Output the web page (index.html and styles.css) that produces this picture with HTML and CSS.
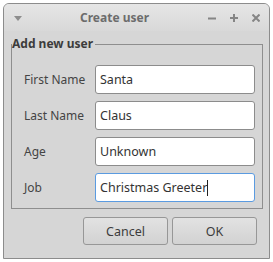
FILE: index.html
```html
<!DOCTYPE html>
<html lang="en">
<head>
    <meta charset="UTF-8">
    <title>Create user</title>
    <link rel="stylesheet" href="styles.css">
</head>
<body>
    <div class="window">
        <div class="titlebar">
            <svg class="menu-icon" width="8" height="5" viewBox="0 0 8 5"><polygon points="0,0 8,0 4,5" fill="#8d8d8d"/></svg>
            <div class="title">Create user</div>
            <div class="title-right">
                <svg width="8" height="8" viewBox="0 0 8 8"><path d="M0 4.5H8" stroke="#858585" stroke-width="2"/></svg>
                <svg width="8" height="8" viewBox="0 0 8 8"><path d="M0 4H8M4 0V8" stroke="#858585" stroke-width="2"/></svg>
                <svg width="8" height="8" viewBox="0 0 8 8"><path d="M0.5 0.5L7.5 7.5M7.5 0.5L0.5 7.5" stroke="#858585" stroke-width="2"/></svg>
            </div>
        </div>
        <div class="content">
            <fieldset class="group">
                <legend>Add new user</legend>
                <div class="form-grid">
                    <label for="first">First Name</label>
                    <input type="text" id="first" value="Santa">
                    <label for="last">Last Name</label>
                    <input type="text" id="last" value="Claus">
                    <label for="age">Age</label>
                    <input type="text" id="age" value="Unknown">
                    <label for="job">Job</label>
                    <div class="input focused">Christmas Greeter<span class="caret"></span></div>
                </div>
            </fieldset>
            <div class="buttons">
                <button type="button">Cancel</button>
                <button type="button">OK</button>
            </div>
        </div>
    </div>
</body>
</html>
```

FILE: styles.css
```css
body {
    margin: 0;
    background-color: #fff;
    font-family: "Noto Sans", "Open Sans", sans-serif;
    font-size: 12px;
    color: #3c3c3c;
}
.window {
    margin: 3px 0 0 3px;
    width: 267px;
    height: 256px;
    box-sizing: border-box;
    border: 1px solid #8c8c8c;
    border-radius: 6px 6px 0 0;
    background-color: #d6d6d6;
    display: flex;
    flex-direction: column;
}
.titlebar {
    height: 27px;
    display: flex;
    align-items: center;
    padding: 0 9px 0 10px;
    border-radius: 5px 5px 0 0;
    background: linear-gradient(#e6e6e6, #d8d8d8);
}
.menu-icon {
    margin-top: 1px;
}
.title {
    margin-left: 58px;
    font-weight: bold;
    color: #6c6c6c;
}
.title-right {
    margin-left: auto;
    display: flex;
    gap: 14px;
}
.content {
    flex: 1;
    padding: 0 12px 0 7px;
}
.group {
    margin: 4px 0 0 0;
    padding: 0;
    border: 1px solid #8e8e8e;
    width: 252px;
    box-sizing: border-box;
}
.group legend {
    padding: 0 2px 0 0;
    font-weight: bold;
    color: #3c3c3c;
    line-height: 18px;
}
.form-grid {
    display: grid;
    grid-template-columns: 71px 160px;
    row-gap: 7px;
    align-items: center;
    padding: 12px 7px 6px 12px;
}
.form-grid label {
    color: #444;
}
.form-grid input,
.form-grid .input {
    height: 29px;
    box-sizing: border-box;
    width: 160px;
    border: 1px solid #8c8c8c;
    border-radius: 3px;
    background-color: #fff;
    padding: 0 4px;
    font-family: inherit;
    font-size: 12.5px;
    color: #333;
    outline: none;
}
.form-grid .input {
    display: flex;
    align-items: center;
}
.form-grid .focused {
    border-color: #5b9be0;
}
.caret {
    display: inline-block;
    width: 1px;
    height: 16px;
    background-color: #222;
}
.buttons {
    display: flex;
    justify-content: flex-end;
    gap: 4px;
    margin-top: 8px;
}
.buttons button {
    width: 85px;
    height: 28px;
    border: 1px solid #979797;
    border-radius: 3px;
    background: linear-gradient(#e2e2e2, #d2d2d2);
    font-family: inherit;
    font-size: 12.5px;
    color: #3c3c3c;
}
```
